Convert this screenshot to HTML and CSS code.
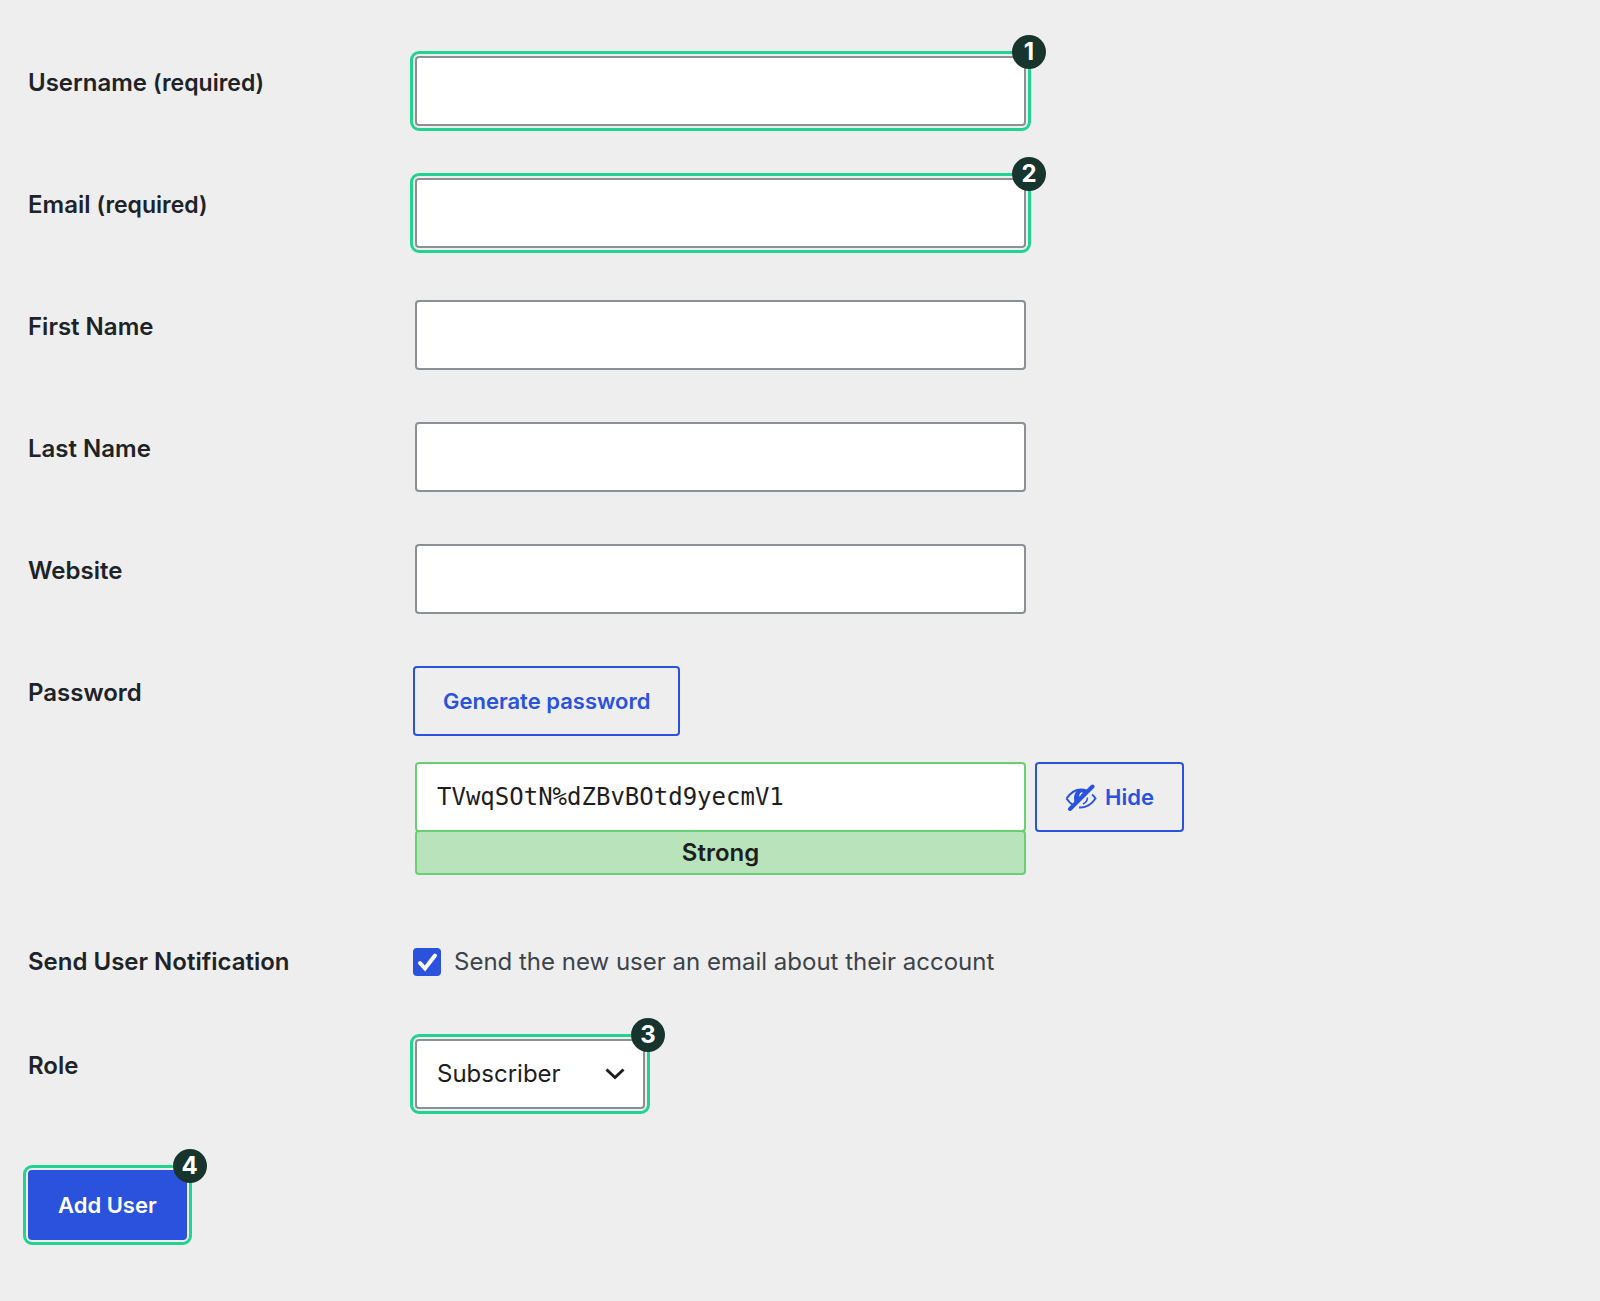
FILE: index.html
```html
<!DOCTYPE html>
<html lang="en">
<head>
<meta charset="utf-8">
<title>Add User</title>
<meta name="viewport" content="width=device-width, initial-scale=1">
<link rel="stylesheet" href="styles.css">
</head>
<body>
<form class="form">
  <div class="row">
    <label class="label" for="username">Username <span class="required">(required)</span></label>
    <div class="marked field"><input class="input ring" id="username" type="text"><span class="badge">1</span></div>
  </div>
  <div class="row">
    <label class="label" for="email">Email <span class="required">(required)</span></label>
    <div class="marked field"><input class="input ring" id="email" type="email"><span class="badge">2</span></div>
  </div>
  <div class="row">
    <label class="label" for="first-name">First Name</label>
    <div class="field"><input class="input" id="first-name" type="text"></div>
  </div>
  <div class="row">
    <label class="label" for="last-name">Last Name</label>
    <div class="field"><input class="input" id="last-name" type="text"></div>
  </div>
  <div class="row">
    <label class="label" for="website">Website</label>
    <div class="field"><input class="input" id="website" type="url"></div>
  </div>
  <div class="row">
    <label class="label" for="password">Password</label>
    <div class="password">
      <button class="button" type="button">Generate password</button>
      <div class="password-line">
        <div class="field">
          <input class="input input-password" id="password" type="text" value="TVwqSOtN%dZBvBOtd9yecmV1">
          <div class="strength">Strong</div>
        </div>
        <button class="button button-hide" type="button">
          <svg class="eye" viewBox="0 0 32 28" fill="none" stroke="currentColor" aria-hidden="true">
            <path d="M1.500 15.500C6 9 10.500 6.500 16 6.500c2 0 4 .4 5.500 1M27 11.500c1.500 1.200 2.500 2.500 3.500 4C26 22 21.500 24.500 16 24.500h-2M1.500 15.500c2 2.800 4 4.900 6 6.200" stroke-width="2"/>
            <path d="M10 21C8 16 9 9.500 13 7c3-1.200 6.500-.5 8.500 1.500z" fill="currentColor" stroke="none"/>
            <path d="M17 10c-2 .5-2.500 2.500-1.500 4" stroke="#eee" stroke-width="1.500" stroke-linecap="round"/>
            <path d="M22.500 14.500c0 3-1.500 5-4.500 6.500" stroke-width="1.500"/>
            <path d="M5 26L27.500 3.500" stroke-width="4" stroke-linecap="round"/>
          </svg>
          Hide
        </button>
      </div>
    </div>
  </div>
  <div class="row row-notify">
    <span class="label">Send User Notification</span>
    <label class="check">
      <span class="check-box">
        <input class="check-input" type="checkbox" checked>
        <svg class="check-mark" viewBox="0 0 28 28" fill="none" stroke="#fff" stroke-width="4" aria-hidden="true"><path d="M7 15l5 5.500L22 7.500" stroke-linecap="round"/></svg>
      </span>
      Send the new user an email about their account
    </label>
  </div>
  <div class="row row-role">
    <label class="label" for="role">Role</label>
    <div class="marked select-box">
      <select class="select ring" id="role"><option>Subscriber</option></select>
      <svg class="chevron" viewBox="0 0 20 12" fill="none" stroke="#1e1e1e" stroke-width="3" aria-hidden="true"><path d="M1.500 1.500L10 9.500l8.500-8"/></svg>
      <span class="badge">3</span>
    </div>
  </div>
  <div class="marked submit">
    <button class="button button-primary ring" type="submit">Add User</button><span class="badge">4</span>
  </div>
</form>
</body>
</html>
```
FILE: styles.css
```css
* {
  box-sizing: border-box;
}

body {
  margin: 0;
  background: #eee;
  color: #1d2327;
  font-family: Inter, "Liberation Sans", sans-serif;
  font-size: 24px;
  line-height: 32px;
}

input,
select,
button {
  margin: 0;
  font: inherit;
}

.form {
  padding: 56px 28px 60px;
}

.row {
  display: grid;
  grid-template-columns: 387px 1fr;
  align-items: start;
  margin-bottom: 52px;
}

.label {
  padding-top: 11px;
  font-size: 24px;
  font-weight: 600;
}

.required {
  font-size: 23px;
}

.field {
  width: 100%;
  max-width: 611px;
}

.input {
  display: block;
  width: 100%;
  height: 70px;
  padding: 0 20px;
  border: 2px solid #8c8f94;
  border-radius: 4px;
  background: #fff;
  color: #1e1e1e;
}

.ring {
  outline: 3px solid #22d293;
  outline-offset: 2px;
}

.marked {
  position: relative;
}

.badge {
  position: absolute;
  top: -21px;
  right: -20px;
  width: 34px;
  height: 34px;
  border-radius: 50%;
  background: #17352d;
  color: #fff;
  font-weight: 700;
  line-height: 34px;
  text-align: center;
}

.button {
  height: 70px;
  padding: 0 28px;
  border: 2px solid #2b52dc;
  border-radius: 4px;
  background: transparent;
  color: #2b52dc;
  font-size: 22px;
  font-weight: 600;
}

.password {
  margin-left: -2px;
}

.password-line {
  display: flex;
  align-items: flex-start;
  gap: 9px;
  margin-top: 26px;
  padding-left: 2px;
}

.input-password {
  border-color: #68cf75;
  font-family: "DejaVu Sans Mono", monospace;
}

.strength {
  height: 45px;
  margin-top: -2px;
  border: 2px solid #68cf75;
  border-radius: 4px;
  background: #b8e3bb;
  color: #1e1e1e;
  font-weight: 600;
  line-height: 42px;
  text-align: center;
}

.button-hide {
  display: flex;
  align-items: center;
  gap: 8px;
}

.eye {
  width: 32px;
  height: 28px;
}

.row-notify {
  margin-top: 71px;
  margin-bottom: 61px;
}

.row-notify .label {
  padding-top: 0;
}

.check {
  display: flex;
  align-items: center;
  gap: 13px;
  margin-left: -2px;
  color: #3c434a;
}

.check-box {
  display: grid;
}

.check-input,
.check-mark {
  grid-area: 1 / 1;
  width: 28px;
  height: 28px;
}

.check-input {
  border-radius: 4px;
  background: #2b52dc;
  appearance: none;
}

.check-mark,
.chevron {
  pointer-events: none;
}

.select-box {
  display: grid;
  align-items: center;
  width: 230px;
}

.select {
  grid-area: 1 / 1;
  width: 100%;
  height: 70px;
  padding: 0 60px 0 20px;
  border: 2px solid #8c8f94;
  border-radius: 4px;
  background: #fff;
  color: #1e1e1e;
  appearance: none;
}

.chevron {
  grid-area: 1 / 1;
  justify-self: end;
  width: 20px;
  height: 12px;
  margin-right: 20px;
}

.row-role {
  margin-bottom: 61px;
}

.submit {
  width: fit-content;
}

.button-primary {
  display: block;
  background: #2b52dc;
  color: #fff;
}
```
